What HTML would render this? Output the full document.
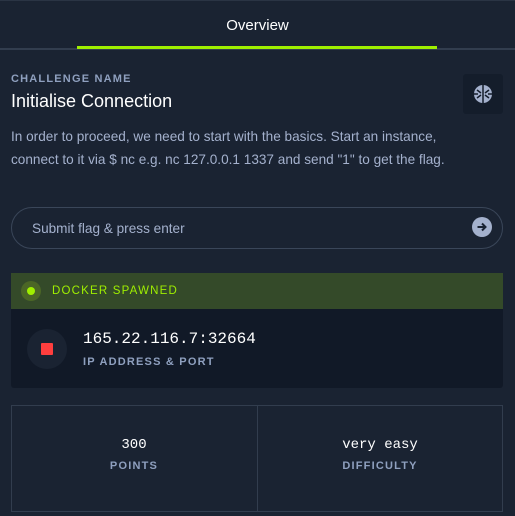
<!DOCTYPE html>
<html><head><style>
*{margin:0;padding:0;box-sizing:border-box}
body{width:515px;height:516px;background:#1a2332;font-family:"Liberation Sans",sans-serif;position:relative;overflow:hidden}
.a{position:absolute}
.lbl{font-size:11px;font-weight:bold;letter-spacing:1.2px;color:#8fa0bf}
.mono{font-family:"Liberation Mono",monospace;color:#fff}
</style></head><body>
<div class="a" style="left:0;top:0;width:515px;height:1px;background:#2a3444"></div>
<div class="a" style="left:0;top:48px;width:515px;height:2px;background:#323d4e"></div>
<div class="a" style="left:77px;top:46px;width:360px;height:3px;background:#9fef00"></div>
<div class="a" style="left:0;top:17px;width:515px;text-align:center;color:#fff;font-size:15px">Overview</div>
<div class="a lbl" style="left:11px;top:73px">CHALLENGE NAME</div>
<div class="a" style="left:11px;top:91px;color:#fff;font-size:18px">Initialise Connection</div>
<div class="a" style="left:463px;top:74px;width:40px;height:40px;background:#141d2b;border-radius:3px">
<svg width="40" height="40" viewBox="0 0 40 40"><g fill="#a4b1cd"><circle cx="20" cy="20" r="9"/></g><g stroke="#141d2b" stroke-width="1.5" fill="none"><path d="M20 11v18M14 16l4 3M26 16l-4 3M14 24l4-3M26 24l-4-3M11 20h4M29 20h-4"/></g></svg></div>
<div class="a" style="left:11px;top:125px;width:460px;color:#a4b1cd;font-size:13.6px;line-height:23px">In order to proceed, we need to start with the basics. Start an instance, connect to it via $ nc e.g. nc 127.0.0.1 1337 and send "1" to get the flag.</div>
<div class="a" style="left:11px;top:207px;width:492px;height:42px;border:1px solid #3a4659;border-radius:21px"></div>
<div class="a" style="left:32px;top:221px;color:#a4b1cd;font-size:13.6px">Submit flag &amp; press enter</div>
<div class="a" style="left:472px;top:217px;width:20px;height:20px;border-radius:50%;background:#a4b1cd">
<svg width="20" height="20" viewBox="0 0 20 20"><path d="M5.5 10h8M10 6.5l3.5 3.5-3.5 3.5" stroke="#1a2332" stroke-width="2" fill="none"/></svg></div>
<div class="a" style="left:11px;top:273px;width:492px;height:36px;background:#344a29"></div>
<div class="a" style="left:21px;top:281px;width:20px;height:20px;border-radius:50%;background:#4b6626"></div>
<div class="a" style="left:27px;top:287px;width:8px;height:8px;border-radius:50%;background:#9fef00"></div>
<div class="a lbl" style="left:52px;top:285px;color:#9fef00;font-weight:normal;font-size:11.5px">DOCKER SPAWNED</div>
<div class="a" style="left:11px;top:309px;width:492px;height:79px;background:#111927;border-radius:0 0 3px 3px"></div>
<div class="a" style="left:27px;top:329px;width:40px;height:40px;border-radius:50%;background:#1a2332"></div>
<div class="a" style="left:41px;top:343px;width:12px;height:12px;background:#ff3e3e;border-radius:1px"></div>
<div class="a mono" style="left:83px;top:330px;font-size:16px">165.22.116.7:32664</div>
<div class="a lbl" style="left:83px;top:356px">IP ADDRESS &amp; PORT</div>
<div class="a" style="left:11px;top:405px;width:492px;height:107px;border:1px solid #323d4e"></div>
<div class="a" style="left:257px;top:405px;width:1px;height:107px;background:#323d4e"></div>
<div class="a mono" style="left:11px;top:437px;width:246px;text-align:center;font-size:14px">300</div>
<div class="a lbl" style="left:11px;top:460px;width:246px;text-align:center">POINTS</div>
<div class="a mono" style="left:257px;top:437px;width:246px;text-align:center;font-size:14px">very easy</div>
<div class="a lbl" style="left:257px;top:460px;width:246px;text-align:center">DIFFICULTY</div>
</body></html>
